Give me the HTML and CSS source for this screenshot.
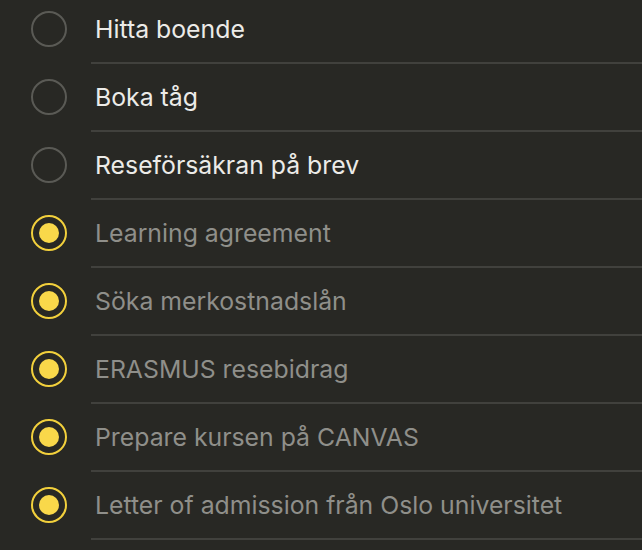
FILE: index.html
```html
<!DOCTYPE html>
<html>
<head>
<meta charset="utf-8">
<link rel="stylesheet" href="styles.css">
</head>
<body>
<ul class="list">
  <li class="item"><span class="check"></span><span class="label">Hitta boende</span></li>
  <li class="item"><span class="check"></span><span class="label">Boka tåg</span></li>
  <li class="item"><span class="check"></span><span class="label">Reseförsäkran på brev</span></li>
  <li class="item done"><span class="check"></span><span class="label">Learning agreement</span></li>
  <li class="item done"><span class="check"></span><span class="label">Söka merkostnadslån</span></li>
  <li class="item done"><span class="check"></span><span class="label">ERASMUS resebidrag</span></li>
  <li class="item done"><span class="check"></span><span class="label">Prepare kursen på CANVAS</span></li>
  <li class="item done"><span class="check"></span><span class="label">Letter of admission från Oslo universitet</span></li>
  <li class="item"><span class="check"></span><span class="label"></span></li>
</ul>
</body>
</html>
```
FILE: styles.css
```css
html, body {
  margin: 0;
  padding: 0;
  background: #282824;
  overflow: hidden;
}
.list {
  list-style: none;
  margin: -4px 0 0 0;
  padding: 0;
  font-family: Inter, "Noto Sans", sans-serif;
}
.item {
  display: flex;
  align-items: stretch;
  height: 68px;
}
.check {
  flex: 0 0 auto;
  width: 32px;
  height: 32px;
  margin: 15px 24px 0 31px;
  border: 2px solid #5a5a55;
  border-radius: 50%;
  position: relative;
}
.label {
  flex: 1;
  display: flex;
  align-items: center;
  padding: 0 0 1px 4px;
  border-bottom: 2px solid #41413d;
  color: #ecebe8;
  font-size: 24.8px;
  font-weight: 400;
  letter-spacing: 0;
}
.done .check {
  border-color: #f2d03c;
}
.done .check::after {
  content: "";
  position: absolute;
  left: 6px;
  top: 6px;
  width: 20px;
  height: 20px;
  border-radius: 50%;
  background: #f9d84a;
}
.done .label {
  color: #8f8f8a;
}
```
